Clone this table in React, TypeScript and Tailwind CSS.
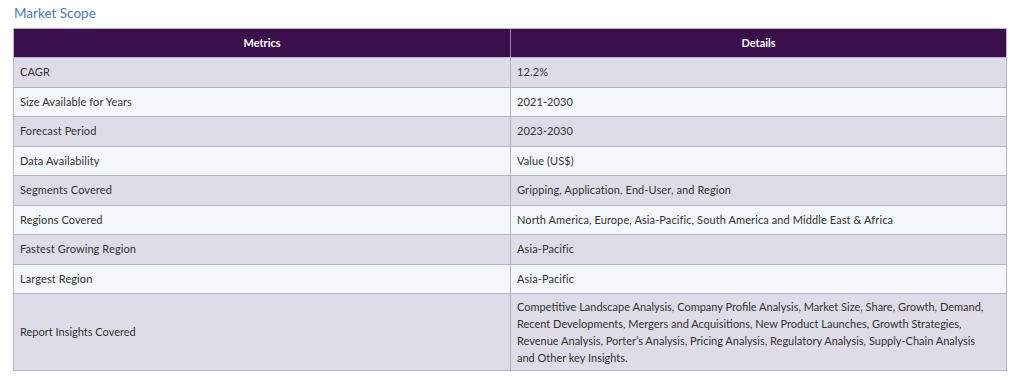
const ROWS: [string, string][] = [
  ['CAGR', '12.2%'],
  ['Size Available for Years', '2021-2030'],
  ['Forecast Period', '2023-2030'],
  ['Data Availability', 'Value (US$)'],
  ['Segments Covered', 'Gripping, Application, End-User, and Region'],
  ['Regions Covered', 'North America, Europe, Asia-Pacific, South America and Middle East & Africa'],
  ['Fastest Growing Region', 'Asia-Pacific'],
  ['Largest Region', 'Asia-Pacific'],
]

const INSIGHTS =
  'Competitive Landscape Analysis, Company Profile Analysis, Market Size, Share, Growth, Demand, Recent Developments, Mergers and Acquisitions, New Product Launches, Growth Strategies, Revenue Analysis, Porter\u2019s Analysis, Pricing Analysis, Regulatory Analysis, Supply-Chain Analysis and Other key Insights.'

export default function App() {
  return (
    <div className="w-[1024px] h-[389px] bg-white font-['Lato','Liberation_Sans',sans-serif] text-[#333]">
      <div className="pl-[14px] pt-[4px] h-[28px] text-[13.5px] leading-[18px] text-[#4b7bb5]">Market Scope</div>

      <div className="ml-[13px] w-[994px] border border-[#b9b0c9]">
        {/* header */}
        <div className="grid grid-cols-[497px_1fr] h-[28px] bg-[#3b0f4b] text-white text-[11px] font-bold">
          <div className="flex items-center justify-center border-r border-[#9c86ad]">Metrics</div>
          <div className="flex items-center justify-center">Details</div>
        </div>

        {ROWS.map(([k, v], i) => (
          <div
            key={k}
            className={`grid grid-cols-[497px_1fr] h-[29.5px] border-t border-[#b9b0c9] text-[11px] tracking-[0.1px] ${i % 2 === 0 ? 'bg-[#dfdce9]' : 'bg-[#f4f7fb]'}`}
          >
            <div className="flex items-center pl-[6px] border-r border-[#b9b0c9]">{k}</div>
            <div className="flex items-center pl-[6px]">{v}</div>
          </div>
        ))}

        <div className="grid grid-cols-[497px_1fr] h-[77px] border-t border-[#b9b0c9] text-[11px] bg-[#dfdce9]">
          <div className="flex items-center pl-[6px] border-r border-[#b9b0c9]">Report Insights Covered</div>
          <div className="flex items-center pl-[6px] pr-[20px] leading-[17px]">{INSIGHTS}</div>
        </div>
      </div>
    </div>
  )
}
